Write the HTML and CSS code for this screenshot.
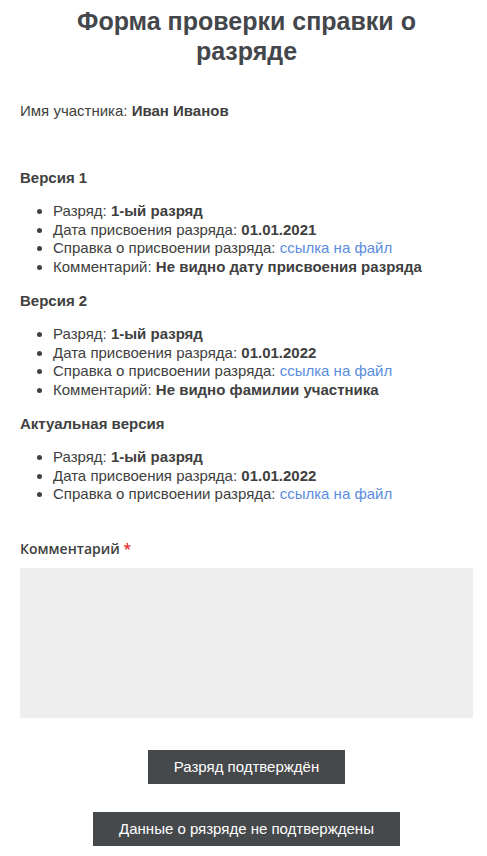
FILE: index.html
```html
<!DOCTYPE html>
<html lang="ru">
<head>
  <meta charset="UTF-8" />
  <meta name="viewport" content="width=device-width, initial-scale=1.0"/>
  <title>Форма проверки справки о разряде</title>
  <link rel="stylesheet" href="styles.css">
</head>
<body>
  <div class="container">
    <h1>Форма проверки справки о разряде</h1>
    <p class="participant">Имя участника: <b>Иван Иванов</b></p>

    <h3 class="version-title first">Версия 1</h3>
    <ul class="version-list">
      <li>Разряд: <b>1-ый разряд</b></li>
      <li>Дата присвоения разряда: <b>01.01.2021</b></li>
      <li>Справка о присвоении разряда: <a href="#">ссылка на файл</a></li>
      <li>Комментарий: <b>Не видно дату присвоения разряда</b></li>
    </ul>

    <h3 class="version-title">Версия 2</h3>
    <ul class="version-list">
      <li>Разряд: <b>1-ый разряд</b></li>
      <li>Дата присвоения разряда: <b>01.01.2022</b></li>
      <li>Справка о присвоении разряда: <a href="#">ссылка на файл</a></li>
      <li>Комментарий: <b>Не видно фамилии участника</b></li>
    </ul>

    <h3 class="version-title">Актуальная версия</h3>
    <ul class="version-list">
      <li>Разряд: <b>1-ый разряд</b></li>
      <li>Дата присвоения разряда: <b>01.01.2022</b></li>
      <li>Справка о присвоении разряда: <a href="#">ссылка на файл</a></li>
    </ul>

    <form class="review-form" onsubmit="return false">
      <label for="comment" class="comment-label">Комментарий <span class="required">*</span></label>
      <textarea id="comment"></textarea>
      <div class="actions">
        <button type="submit" class="btn">Разряд подтверждён</button>
        <button type="button" class="btn">Данные о рязряде не подтверждены</button>
      </div>
    </form>
  </div>
</body>
</html>
```

FILE: styles.css
```css
body {
  margin: 0;
  font-family: "Liberation Sans", Arial, sans-serif;
  font-size: 15px;
  line-height: 18.6px;
  color: #404040;
  background: #fff;
}
.container {
  width: 453px;
  margin-left: 20px;
}
h1 {
  margin: 6px 0 0;
  padding: 0 30px;
  font-size: 25px;
  line-height: 30px;
  text-align: center;
  color: #43464a;
}
.participant {
  margin: 36px 0 0;
}
.version-title {
  margin: 15px 0 0;
  font-size: 15px;
  line-height: 18.6px;
}
.version-title.first { margin-top: 48px; }
.version-list {
  margin: 15px 0 0;
  padding-left: 33px;
}
.version-list a {
  color: #5a8dde;
  text-decoration: none;
}
.review-form {
  display: flex;
  flex-direction: column;
}
.comment-label {
  margin-top: 36px;
  font-family: "Open Sans", sans-serif;
  font-weight: 600;
  font-size: 14px;
  line-height: 18.6px;
  color: #404040;
}
.required { color: #f02828; }
#comment {
  margin-top: 9px;
  height: 150px;
  box-sizing: border-box;
  border: none;
  background: #eeeeee;
  resize: none;
  font: inherit;
}
.actions {
  display: flex;
  flex-direction: column;
  align-items: center;
  gap: 28px;
  margin-top: 32px;
}
.btn {
  height: 34px;
  padding: 0 26px;
  border: none;
  background: #46494c;
  color: #fff;
  font-family: "Liberation Sans", Arial, sans-serif;
  font-size: 15px;
  cursor: pointer;
}
```
